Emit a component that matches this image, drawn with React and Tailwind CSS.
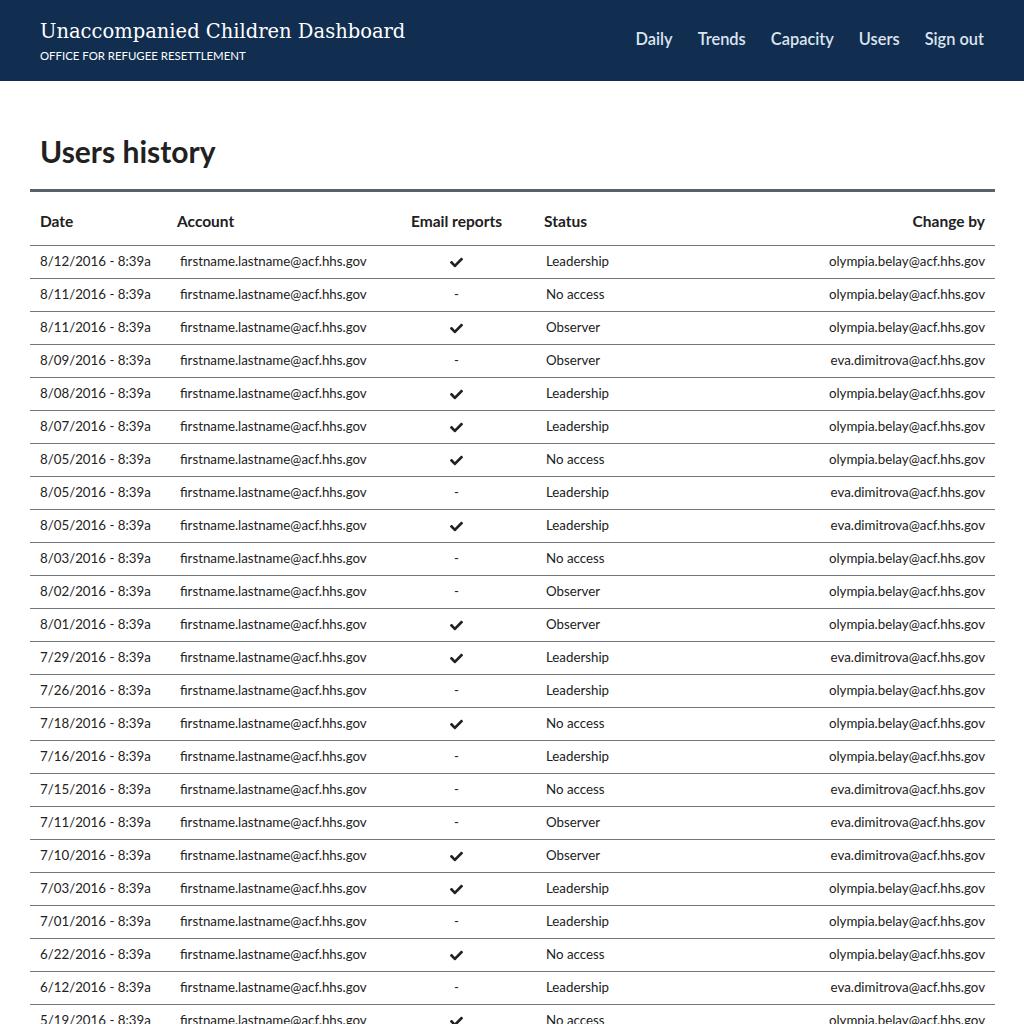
import React from "react";
import { FaCheck } from "react-icons/fa";

const O = "olympia.belay@acf.hhs.gov";
const E = "eva.dimitrova@acf.hhs.gov";
const rows = [
  ["8/12/2016", 1, "Leadership", O],
  ["8/11/2016", 0, "No access", O],
  ["8/11/2016", 1, "Observer", O],
  ["8/09/2016", 0, "Observer", E],
  ["8/08/2016", 1, "Leadership", O],
  ["8/07/2016", 1, "Leadership", O],
  ["8/05/2016", 1, "No access", O],
  ["8/05/2016", 0, "Leadership", E],
  ["8/05/2016", 1, "Leadership", E],
  ["8/03/2016", 0, "No access", O],
  ["8/02/2016", 0, "Observer", O],
  ["8/01/2016", 1, "Observer", O],
  ["7/29/2016", 1, "Leadership", E],
  ["7/26/2016", 0, "Leadership", O],
  ["7/18/2016", 1, "No access", O],
  ["7/16/2016", 0, "Leadership", O],
  ["7/15/2016", 0, "No access", E],
  ["7/11/2016", 0, "Observer", E],
  ["7/10/2016", 1, "Observer", E],
  ["7/03/2016", 1, "Leadership", O],
  ["7/01/2016", 0, "Leadership", O],
  ["6/22/2016", 1, "No access", O],
  ["6/12/2016", 0, "Leadership", E],
  ["5/19/2016", 1, "No access", O],
  ["5/12/2016", 0, "Observer", E],
];

const sans = { fontFamily: '"Lato", "Open Sans", sans-serif' };

export default function App() {
  return (
    <div className="min-h-screen bg-white text-[#212121]" style={sans}>
      <header className="h-[81px] bg-[#112e51] flex items-center justify-between pl-[40px] pr-[40px]">
        <div className="flex flex-col mt-[2px]">
          <div
            className="text-white text-[19.5px] leading-[26px]"
            style={{ fontFamily: '"DejaVu Serif", "Liberation Serif", serif' }}
          >
            Unaccompanied Children Dashboard
          </div>
          <div className="text-white text-[11.4px] leading-[16px] mt-[3px]">
            OFFICE FOR REFUGEE RESETTLEMENT
          </div>
        </div>
        <nav className="flex items-center gap-[25px] text-[16.4px] font-semibold text-[#dce4ef] -mt-[3px]">
          <span>Daily</span>
          <span>Trends</span>
          <span>Capacity</span>
          <span>Users</span>
          <span>Sign out</span>
        </nav>
      </header>
      <main className="pl-[30px] pr-[29px] pt-[52px]">
        <h1 className="ml-[10px] text-[30px] leading-[36px] font-bold text-[#212121] mb-[20px]">
          Users history
        </h1>
        <div className="border-t-[3px] border-[#5b616b]">
          <div className="grid grid-cols-[137px_232px_115px_200px_1fr] h-[54px] border-b border-[#71767a] text-[15.5px] font-bold items-center pt-[7px]">
            <div className="pl-[10px]">Date</div>
            <div className="pl-[10px]">Account</div>
            <div className="text-center">Email reports</div>
            <div className="pl-[30px]">Status</div>
            <div className="text-right pr-[10px]">Change by</div>
          </div>
          {rows.map((r, i) => (
            <div
              key={i}
              className="grid grid-cols-[137px_232px_115px_200px_1fr] h-[33px] border-b border-[#71767a] text-[13.3px] items-center"
            >
              <div className="pl-[10px]">{r[0]} - 8:39a</div>
              <div className="pl-[13px]">firstname.lastname@acf.hhs.gov</div>
              <div className="flex justify-center">
                {r[1] ? <FaCheck className="w-[13px] h-[13px] text-[#212121]" /> : <span>-</span>}
              </div>
              <div className="pl-[32px]">{r[2]}</div>
              <div className="text-right pr-[10px]">{r[3]}</div>
            </div>
          ))}
        </div>
      </main>
    </div>
  );
}
